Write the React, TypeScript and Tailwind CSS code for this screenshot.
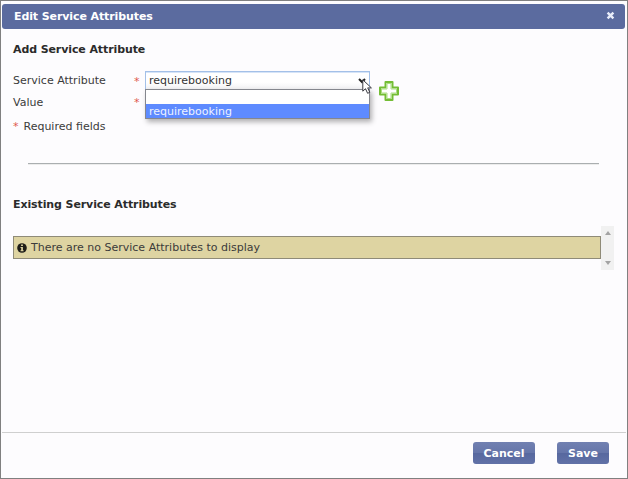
import React from 'react';

function Required() {
  return <span className="text-[#e0574d]">*</span>;
}

function CloseIcon() {
  return (
    <svg className="h-[9px] w-[9px]" viewBox="0 0 9 9">
      <path d="M1.6 1.6 7.4 7.4M7.4 1.6 1.6 7.4" stroke="#e9edfa" strokeWidth="2.4" />
    </svg>
  );
}

function PlusIcon() {
  return (
    <svg className="h-5 w-5" viewBox="0 0 20 20">
      <path d="M6.500 1h7v5.500H19v7h-5.500V19h-7v-5.500H1v-7h5.500z" fill="#fff" stroke="#74bd35" strokeWidth="2" strokeLinejoin="round" />
      <path d="M8 2.500h4V8h5.500v4H12v5.500H8V12H2.500V8H8z" fill="none" stroke="#a9dd80" strokeWidth="1" />
    </svg>
  );
}

function InfoIcon() {
  return (
    <svg className="h-[10px] w-[10px]" viewBox="0 0 10 10">
      <circle cx="5" cy="5" r="4.800" fill="#1d1c18" />
      <path d="M4.100 1.500h1.800v1.400H4.100zM3.500 3.900h2.400v3.300h.7v1.100H3.500V7.200h.7V5h-.7z" fill="#ded4a2" />
    </svg>
  );
}

function Pointer() {
  return (
    <svg className="absolute left-[217px] top-[8px] h-[16px] w-[12px]" viewBox="0 0 12 16">
      <path d="M.8.8v11.400l2.700-2.500 2.100 4.600 2.200-1-2.100-4.400h3.700z" fill="#fff" stroke="#3a3a42" strokeWidth="1" />
    </svg>
  );
}

const button =
  'h-[22px] rounded-[3px] bg-[linear-gradient(#7180b1_0%,#6676aa_48%,#57689f_52%,#6171a7_100%)] text-center text-[11px] leading-[23px] font-bold text-white';

export default function App() {
  return (
    <div className="flex h-[479px] w-[628px] flex-col border border-[#808080] bg-[#fdfcfe] px-px pt-[3px] font-['DejaVu_Sans',Verdana,sans-serif] text-[11px] text-[#3b3b3b]">
      <header className="flex h-[25px] w-[623px] shrink-0 items-center justify-between rounded-[3px] bg-[#5b6b9f] pr-[10px] pl-3 text-white">
        <h1 className="text-[11px] leading-[25px] font-bold tracking-[-0.1px]">Edit Service Attributes</h1>
        <button className="-mt-[3px]" aria-label="Close"><CloseIcon /></button>
      </header>

      <main className="flex h-[404px] shrink-0 flex-col border-b border-[#cfcfcf] pl-[11px]">
        <h2 className="mt-[13px] h-4 text-[11px] leading-4 font-bold tracking-[-0.1px] text-[#2b2b2b]">Add Service Attribute</h2>
        <div className="mt-[13px] grid w-[400px] grid-cols-[121px_11px_225px_1fr]">
          <div>
            <div className="h-[21px] leading-[20px]">Service Attribute</div>
            <div className="h-[21px] leading-[21px]">Value</div>
          </div>
          <div className="flex flex-col leading-[21px]"><Required /><Required /></div>
          <div className="relative h-[19px]">
            <div className="flex h-[19px] items-center justify-between border border-[#a3c0e8] bg-[linear-gradient(#fff_60%,#f2f2f4)] pr-[3px] pl-[3px] text-[#333] shadow-[inset_0_1px_0_#d6e4f7]">
              <span className="leading-[19px]">requirebooking</span>
              <svg className="h-[6px] w-[8px]" viewBox="0 0 8 6"><path d="m1 1 3 3 3-3" fill="none" stroke="#222" strokeWidth="2" /></svg>
            </div>
            <div className="absolute top-[18px] left-0 h-[30px] w-[225px] border border-[#85878e] bg-white shadow-[2px_3px_5px_rgba(0,0,0,0.3)]">
              <div className="h-[14px]" />
              <div className="h-[14px] bg-[#5e8bff] pl-[3px] leading-[15px] text-[#edf2ff]">requirebooking</div>
            </div>
            <Pointer />
          </div>
          <div className="pt-[10px] pl-[9px]"><PlusIcon /></div>
        </div>
        <p className="mt-[5px] h-4 leading-[17px]"><Required /><span className="pl-[5px]">Required fields</span></p>
        <hr className="mt-[29px] ml-[15px] h-[2px] w-[571px] border-t border-b border-t-[#aaaeb0] border-b-[#ececec]" />
        <h2 className="mt-[31px] h-4 text-[11px] leading-[17px] font-bold tracking-[-0.1px] text-[#2b2b2b]">Existing Service Attributes</h2>
        <div className="mt-[14px] flex h-[44px] w-[601px]">
          <div className="mt-[10px] flex h-[23px] w-[588px] items-center gap-1 border border-[#8f8b78] bg-[#ded4a2] pl-[3px]">
            <InfoIcon />
            <span className="leading-[23px]">There are no Service Attributes to display</span>
          </div>
          <div className="flex w-[13px] flex-col items-center justify-between bg-[#f1f1f1] py-[5px]">
            <svg className="h-[4px] w-[6px]" viewBox="0 0 6 4"><path d="M0 4 3 0l3 4z" fill="#a3a3a3" /></svg>
            <svg className="h-[4px] w-[6px]" viewBox="0 0 6 4"><path d="m0 0 3 4 3-4z" fill="#a3a3a3" /></svg>
          </div>
        </div>
      </main>

      <footer className="flex justify-end gap-[22px] pt-[9px] pr-[17px]">
        <button className={`${button} w-[62px]`}>Cancel</button>
        <button className={`${button} w-[52px]`}>Save</button>
      </footer>
    </div>
  );
}
